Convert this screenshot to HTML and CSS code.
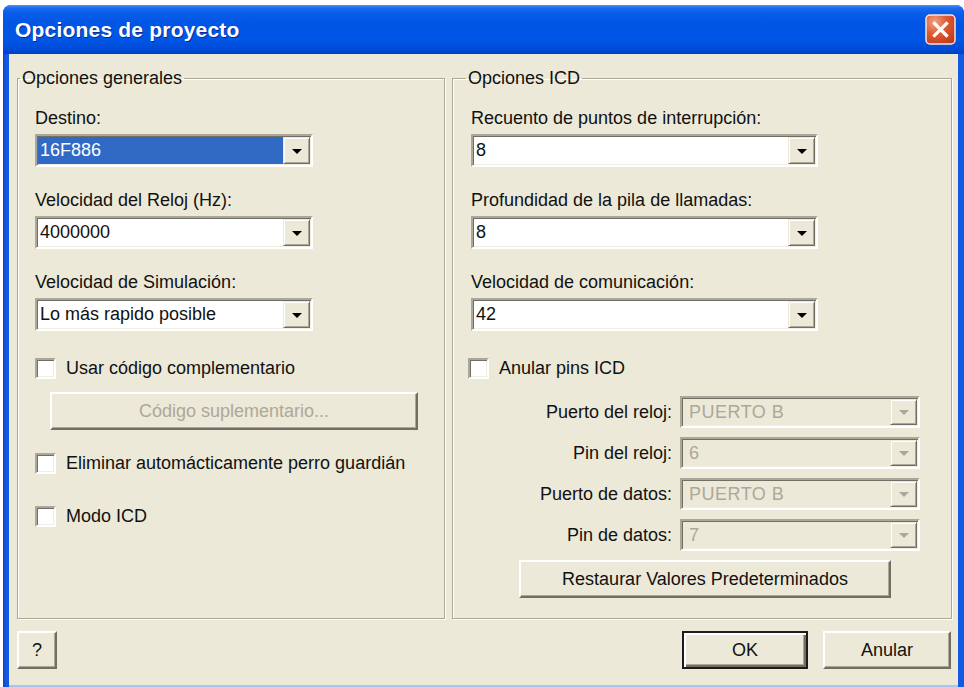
FILE: index.html
```html
<!DOCTYPE html>
<html lang="es">
<head>
<meta charset="utf-8">
<title>Opciones de proyecto</title>
<link rel="stylesheet" href="styles.css">
</head>
<body>
<div class="window">
  <div class="titlebar">
    <span class="title">Opciones de proyecto</span>
    <button class="close" aria-label="Cerrar">
      <svg width="31" height="31" viewBox="0 0 31 31">
        <defs>
          <radialGradient id="closeFill" cx="0.3" cy="0.25" r="0.9">
            <stop offset="0" stop-color="#f2a283"/>
            <stop offset="0.45" stop-color="#dc5c34"/>
            <stop offset="1" stop-color="#c0391a"/>
          </radialGradient>
        </defs>
        <rect x="1" y="1" width="29" height="29" rx="4" fill="url(#closeFill)" stroke="#fbe4da" stroke-width="1.5"/>
        <path d="M9.5 9.5 L21.5 21.5 M21.5 9.5 L9.5 21.5" stroke="#fff" stroke-width="3.2" stroke-linecap="square"/>
      </svg>
    </button>
  </div>
  <div class="frame">
    <div class="client">
      <div class="groups">
        <fieldset class="group group-general">
          <legend>Opciones generales</legend>
          <div class="field">
            <div class="label">Destino:</div>
            <div class="combo combo-general"><span class="combo-value is-selected">16F886</span><span class="combo-drop"></span></div>
          </div>
          <div class="field">
            <div class="label">Velocidad del Reloj (Hz):</div>
            <div class="combo combo-general"><span class="combo-value">4000000</span><span class="combo-drop"></span></div>
          </div>
          <div class="field">
            <div class="label">Velocidad de Simulación:</div>
            <div class="combo combo-general"><span class="combo-value">Lo más rapido posible</span><span class="combo-drop"></span></div>
          </div>
          <label class="check check-supplement"><span class="box"></span>Usar código complementario</label>
          <button class="btn btn-supplement" disabled>Código suplementario...</button>
          <label class="check check-watchdog"><span class="box"></span>Eliminar automácticamente perro guardián</label>
          <label class="check check-icd"><span class="box"></span>Modo ICD</label>
        </fieldset>

        <fieldset class="group group-icd">
          <legend>Opciones ICD</legend>
          <div class="field">
            <div class="label">Recuento de puntos de interrupción:</div>
            <div class="combo combo-icd"><span class="combo-value">8</span><span class="combo-drop"></span></div>
          </div>
          <div class="field">
            <div class="label">Profundidad de la pila de llamadas:</div>
            <div class="combo combo-icd"><span class="combo-value">8</span><span class="combo-drop"></span></div>
          </div>
          <div class="field">
            <div class="label">Velocidad de comunicación:</div>
            <div class="combo combo-icd"><span class="combo-value">42</span><span class="combo-drop"></span></div>
          </div>
          <label class="check check-pins"><span class="box"></span>Anular pins ICD</label>
          <div class="pin-grid">
            <div class="pin-label">Puerto del reloj:</div>
            <div class="combo combo-pin is-disabled"><span class="combo-value">PUERTO B</span><span class="combo-drop"></span></div>
            <div class="pin-label">Pin del reloj:</div>
            <div class="combo combo-pin is-disabled"><span class="combo-value">6</span><span class="combo-drop"></span></div>
            <div class="pin-label">Puerto de datos:</div>
            <div class="combo combo-pin is-disabled"><span class="combo-value">PUERTO B</span><span class="combo-drop"></span></div>
            <div class="pin-label">Pin de datos:</div>
            <div class="combo combo-pin is-disabled"><span class="combo-value">7</span><span class="combo-drop"></span></div>
          </div>
          <button class="btn btn-restore">Restaurar Valores Predeterminados</button>
        </fieldset>
      </div>

      <div class="footer">
        <button class="btn btn-help">?</button>
        <button class="btn btn-default btn-ok">OK</button>
        <button class="btn btn-cancel">Anular</button>
      </div>
    </div>
  </div>
</div>
</body>
</html>
```

FILE: styles.css
```css
* {
  box-sizing: border-box;
}

html,
body {
  margin: 0;
  padding: 0;
  background: #fff;
}

body {
  width: 964px;
  height: 687px;
  overflow: hidden;
  font-family: "Liberation Sans", Arial, sans-serif;
  font-size: 18px;
  color: #111;
}

/* Window chrome */
.window {
  margin: 5px 0 0 3px;
  width: 961px;
  height: 682px;
  display: flex;
  flex-direction: column;
  border-radius: 8px 8px 0 0;
  overflow: hidden;
  background: #0d52de;
}

.titlebar {
  flex: none;
  height: 49px;
  display: flex;
  align-items: center;
  padding: 0 8px 0 12px;
  background: linear-gradient(180deg,
      #4a95f7 0px,
      #1a6cef 3px,
      #0a5ce9 8px,
      #0055e4 20px,
      #0056e6 34px,
      #004bd8 44px,
      #003fc6 49px);
}

.title {
  flex: 1;
  color: #fff;
  font-family: "Liberation Sans", Arial, sans-serif;
  font-weight: bold;
  font-size: 21px;
  letter-spacing: 0.2px;
  text-shadow: 1px 1px 0 #0a2a9c;
  white-space: nowrap;
}

.close {
  flex: none;
  width: 31px;
  height: 31px;
  padding: 0;
  border: 0;
  background: none;
  display: block;
}

.close svg {
  display: block;
}

.frame {
  flex: 1;
  display: flex;
  padding: 0 6px;
  background: linear-gradient(90deg, #0a45c9 0, #1459e2 3px, #1459e2 100%);
}

.client {
  flex: 1;
  display: flex;
  flex-direction: column;
  padding-top: 14px;
  background: #ece9d8;
  border-bottom: 2px solid #a9c6f3;
}

/* Group boxes */
.groups {
  display: flex;
  gap: 7px;
  padding: 0 6px 0 8px;
}

.group {
  margin: 0;
  min-width: 0;
  border: 1px solid #aca899;
  box-shadow: inset 1px 1px 0 #fff, 1px 1px 0 #fff;
  padding: 20px 0 20px;
}

.group legend {
  padding: 0 2px;
  line-height: 20px;
  white-space: nowrap;
}

.group-general {
  width: 428px;
  padding-left: 17px;
}

.group-general legend {
  margin-left: -15px;
}

.group-icd {
  flex: 1;
  padding-left: 18px;
}

.group-icd legend {
  margin-left: -5px;
}

.field + .field {
  margin-top: 23px;
}

.label {
  line-height: 20px;
  margin-bottom: 6px;
  white-space: nowrap;
}

/* Combo boxes */
.combo {
  display: flex;
  height: 33px;
  padding: 1px;
  border: 2px solid;
  border-color: #aca899 #fff #fff #aca899;
  box-shadow: inset 1px 1px 0 #716f64, inset -1px -1px 0 #f1efe2;
  background: #fff;
}

.combo-general {
  width: 278px;
}

.combo-icd {
  width: 347px;
}

.combo-pin {
  width: 240px;
  height: 32px;
}

.combo-value {
  flex: 1;
  min-width: 0;
  padding-left: 2px;
  line-height: 27px;
  white-space: nowrap;
  overflow: hidden;
}

.combo-pin .combo-value {
  line-height: 26px;
}

.is-selected {
  background: #316ac5;
  color: #fff;
}

.combo-drop {
  flex: none;
  width: 27px;
  display: flex;
  align-items: center;
  justify-content: center;
  background: #ece9d8;
  border: 1px solid;
  border-color: #ece9d8 #716f64 #716f64 #ece9d8;
  box-shadow: inset 1px 1px 0 #fff, inset -1px -1px 0 #aca899;
}

.combo-drop::after {
  content: "";
  width: 0;
  height: 0;
  margin-top: 1px;
  border-left: 5px solid transparent;
  border-right: 5px solid transparent;
  border-top: 5px solid #000;
}

.combo.is-disabled {
  background: #ece9d8;
}

.is-disabled .combo-value {
  padding-left: 6px;
  color: #aca899;
  letter-spacing: 0.5px;
}

.is-disabled .combo-drop::after {
  border-top-color: #aca899;
}

/* Check boxes */
.check {
  display: flex;
  align-items: center;
  gap: 10px;
  height: 21px;
  line-height: 21px;
  white-space: nowrap;
}

.box {
  flex: none;
  width: 21px;
  height: 21px;
  border: 2px solid;
  border-color: #aca899 #fff #fff #aca899;
  box-shadow: inset 1px 1px 0 #716f64, inset -1px -1px 0 #f1efe2;
  background: #fff;
}

.check-supplement {
  margin-top: 27px;
}

.check-watchdog {
  margin-top: 23px;
}

.check-icd {
  margin-top: 32px;
}

.check-pins {
  margin-top: 27px;
  margin-left: -3px;
}

.pin-grid {
  display: grid;
  grid-template-columns: 201px 240px;
  column-gap: 8px;
  row-gap: 9px;
  margin-top: 17px;
}

.pin-label {
  text-align: right;
  line-height: 32px;
  white-space: nowrap;
}

/* Push buttons */
.btn {
  display: block;
  height: 38px;
  padding: 0;
  font-family: "Liberation Sans", Arial, sans-serif;
  font-size: 18px;
  color: #111;
  background: #ece9d8;
  border: 2px solid;
  border-color: #fff #716f64 #716f64 #fff;
  box-shadow: inset -1px -1px 0 #aca899;
  white-space: nowrap;
}

.btn:disabled {
  color: #aca899;
}

.btn-supplement {
  width: 368px;
  margin: 13px 0 0 15px;
}

.btn-restore {
  width: 372px;
  margin: 9px 0 0 48px;
}

.btn-default {
  border: 2px solid #1c1c1c;
  box-shadow: inset 2px 2px 0 #fff, inset -2px -2px 0 #716f64, inset -3px -3px 0 #aca899;
}

.footer {
  display: flex;
  align-items: center;
  gap: 15px;
  margin-top: 12px;
  padding: 0 7px 0 8px;
}

.btn-help {
  width: 40px;
  margin-right: auto;
}

.btn-ok {
  width: 126px;
}

.btn-cancel {
  width: 128px;
}
```
